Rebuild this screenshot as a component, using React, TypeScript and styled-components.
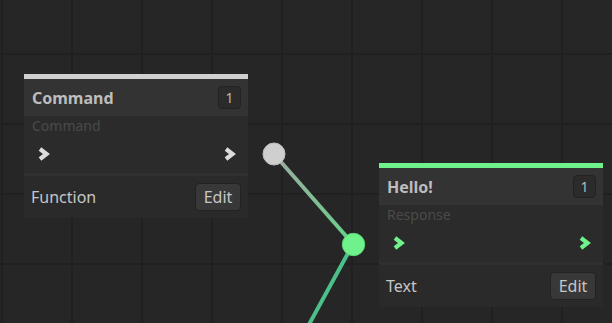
import React from 'react';
import styled, { createGlobalStyle } from 'styled-components';

const GlobalStyle = createGlobalStyle`
  html, body {
    margin: 0;
    padding: 0;
    background: #262626;
    font-family: "Noto Sans", "Open Sans", sans-serif;
  }
`;

const Canvas = styled.div`
  position: relative;
  width: 612px;
  height: 323px;
  overflow: hidden;
  background-color: #262626;
  background-image:
    linear-gradient(to right, #202020 2px, transparent 2px),
    linear-gradient(to bottom, #202020 2px, transparent 2px);
  background-size: 70px 70px;
  background-position: 1px 53px;
`;

const Edges = styled.svg`
  position: absolute;
  left: 0;
  top: 0;
  width: 612px;
  height: 323px;
  pointer-events: none;
`;

const Node = styled.div<{ $x: number; $y: number; $accent: string }>`
  position: absolute;
  left: ${(p) => p.$x}px;
  top: ${(p) => p.$y}px;
  width: 224px;
  display: flex;
  flex-direction: column;
  border-top: 5px solid ${(p) => p.$accent};
  background: #2b2b2b;
`;

const Header = styled.div`
  height: 37px;
  display: flex;
  align-items: center;
  justify-content: space-between;
  padding: 0 7px 0 8px;
  background: #333333;
`;

const Title = styled.span`
  font-weight: 700;
  font-size: 16px;
  color: #bdbdbd;
`;

const Badge = styled.span`
  box-sizing: border-box;
  width: 23px;
  height: 23px;
  display: flex;
  align-items: center;
  justify-content: center;
  border: 1px solid #222;
  border-radius: 4px;
  background: #2b2b2b;
  color: #b8b8b8;
  font-size: 14px;
`;

const Body = styled.div`
  height: 57px;
  display: flex;
  flex-direction: column;
  padding: 0 8px;
`;

const Subtitle = styled.div`
  height: 22px;
  line-height: 20px;
  font-size: 14px;
  color: #4a4a4a;
`;

const PortRow = styled.div`
  flex: 1;
  display: flex;
  align-items: center;
  justify-content: space-between;
  padding: 0 4px 4px 5px;
`;

const Separator = styled.div`
  height: 3px;
  background: #303030;
`;

const Footer = styled.div`
  height: 42px;
  display: flex;
  align-items: center;
  justify-content: space-between;
  padding: 0 7px 0 7px;
  background: #2a2a2a;
`;

const Label = styled.span`
  font-size: 16px;
  color: #c6c6c6;
`;

const EditButton = styled.button`
  box-sizing: border-box;
  width: 46px;
  height: 28px;
  padding: 0;
  border: 1px solid #222;
  border-radius: 4px;
  background: #383838;
  color: #c6c6c6;
  font-family: inherit;
  font-size: 16px;
`;

const Chevron = ({ color }: { color: string }) => (
  <svg width="13" height="16" viewBox="0 0 13 16">
    <polyline
      points="3,3 9.5,8 3,13"
      fill="none"
      stroke={color}
      strokeWidth="4.2"
      strokeLinejoin="miter"
    />
  </svg>
);

type NodeProps = {
  x: number;
  y: number;
  accent: string;
  port: string;
  title: string;
  subtitle: string;
  label: string;
};

const GraphNode = ({ x, y, accent, port, title, subtitle, label }: NodeProps) => (
  <Node $x={x} $y={y} $accent={accent}>
    <Header>
      <Title>{title}</Title>
      <Badge>1</Badge>
    </Header>
    <Body>
      <Subtitle>{subtitle}</Subtitle>
      <PortRow>
        <Chevron color={port} />
        <Chevron color={port} />
      </PortRow>
    </Body>
    <Separator />
    <Footer>
      <Label>{label}</Label>
      <EditButton>Edit</EditButton>
    </Footer>
  </Node>
);

const App: React.FC = () => {
  return (
    <>
      <GlobalStyle />
      <Canvas>
        <GraphNode
          x={24}
          y={74}
          accent="#d0d0d0"
          port="#dcdcdc"
          title="Command"
          subtitle="Command"
          label="Function"
        />
        <GraphNode
          x={379}
          y={163}
          accent="#6ff28b"
          port="#6ff28b"
          title="Hello!"
          subtitle="Response"
          label="Text"
        />
        <Edges viewBox="0 0 612 323">
          <defs>
            <linearGradient id="wire" x1="274" y1="154" x2="353" y2="244" gradientUnits="userSpaceOnUse">
              <stop offset="0" stopColor="#9cab9f" />
              <stop offset="1" stopColor="#66d08a" />
            </linearGradient>
          </defs>
          <line x1="274" y1="154" x2="353" y2="244" stroke="url(#wire)" strokeWidth="4" />
          <line x1="353" y1="244" x2="306" y2="330" stroke="#4cc08b" strokeWidth="4" />
          <circle cx="274" cy="154" r="11" fill="#cfcfcf" stroke="#bdbdbd" strokeWidth="1" />
          <circle cx="353.5" cy="244.5" r="11.2" fill="#6ff28b" stroke="#5cd677" strokeWidth="1" />
        </Edges>
      </Canvas>
    </>
  );
};

export default App;
